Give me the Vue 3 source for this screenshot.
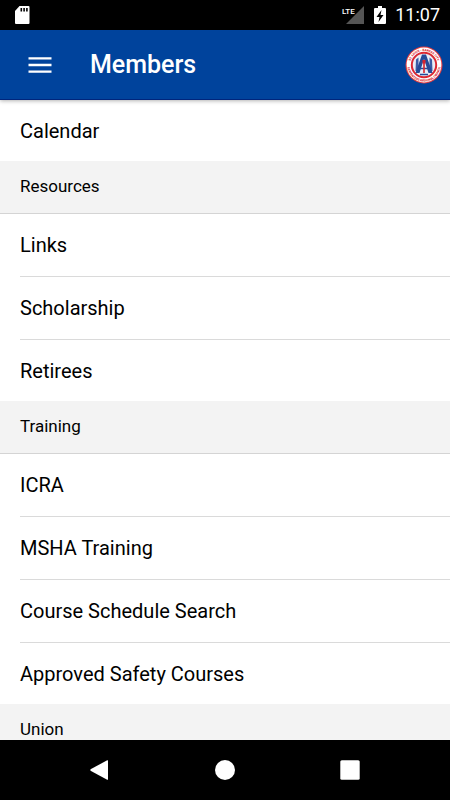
<template>
  <div class="screen">
    <div class="status-bar">
      <svg class="sd-icon" viewBox="0 0 16 20" aria-hidden="true">
        <path d="M5.500 1H14.500Q15.500 1 15.500 2V18Q15.500 19 14.500 19H2Q1 19 1 18V6Z" fill="#fff" />
        <path d="M6.500 3h1.600v3.500H6.500zM9.300 3h1.600v3.500H9.300zM12.100 3h1.600v3.500h-1.600z" fill="#000" />
      </svg>
      <div class="status-right">
        <svg class="signal-icon" viewBox="0 0 24 20" aria-label="LTE signal">
          <path d="M23 1V19H5Z" fill="#555" />
          <text x="1" y="9" class="lte">LTE</text>
        </svg>
        <svg class="battery-icon" viewBox="0 0 12 20" aria-hidden="true">
          <path d="M4 1h4v2h3q1 0 1 1v14q0 1-1 1H1q-1 0-1-1V4q0-1 1-1h3z" fill="#fff" />
          <path d="M7.500 5L2.500 12H5.500L4.500 17L9.500 10H6.500Z" fill="#000" />
        </svg>
        <span class="clock">11:07</span>
      </div>
    </div>

    <header class="app-bar">
      <button class="menu-btn" aria-label="Open menu">
        <svg viewBox="0 0 24 16" aria-hidden="true">
          <path d="M0.500 0.200h23v2.400h-23zM0.500 6.800h23v2.400h-23zM0.500 13.400h23v2.400h-23z" fill="#fff" />
        </svg>
      </button>
      <h1>Members</h1>
      <svg class="logo" viewBox="0 0 38 38" aria-label="Regional council logo">
        <defs>
          <path id="arc-top" d="M5 19a14 14 0 0 1 28 0" />
          <path id="arc-bottom" d="M2.400 19a16.600 16.600 0 0 0 33.200 0" />
        </defs>
        <circle cx="19" cy="19" r="18.500" fill="#e33b3f" />
        <circle cx="19" cy="19" r="17.400" fill="#fff" />
        <text class="logo-text"><textPath href="#arc-top" startOffset="50%">ST. LOUIS - KANSAS CITY</textPath></text>
        <text class="logo-text"><textPath href="#arc-bottom" startOffset="50%">CARPENTERS REGIONAL COUNCIL</textPath></text>
        <circle cx="19" cy="19" r="12.200" fill="#e9edf6" stroke="#dc2832" stroke-width="2" />
        <path d="M11 13.500L13.500 11.500V25H10.500zM27 13.500L24.500 11.500V25H27.500z" fill="#3b5ca5" />
        <path d="M17 8.500H21L27.500 27H23.500L19 13L14.500 27H10.500Z" fill="#254b98" />
        <path d="M13 22.500H25M15 28.500H23" stroke="#254b98" stroke-width="1.300" />
        <path d="M17.500 14h3v3.500h-0.700V27h-1.600v-9.500h-0.700z" fill="#d8242e" />
      </svg>
    </header>

    <main class="content">
      <section v-for="(group, i) in groups" :key="i" class="group">
        <h2 v-if="group.title">{{ group.title }}</h2>
        <ul v-if="group.items.length">
          <li v-for="item in group.items" :key="item">
            <a href="#" @click.prevent>{{ item }}</a>
          </li>
        </ul>
      </section>
    </main>

    <nav class="nav-bar" aria-label="System navigation">
      <button aria-label="Back">
        <svg viewBox="0 0 20 20"><path d="M18 0.800V19.200Q18 20 17.200 19.700L1 11Q-0.500 10 1 9L17.200 0.300Q18 0 18 0.800Z" fill="#fff" /></svg>
      </button>
      <button aria-label="Home">
        <svg viewBox="0 0 20 20"><circle cx="10" cy="10" r="10" fill="#fff" /></svg>
      </button>
      <button aria-label="Recent apps">
        <svg viewBox="0 0 20 20"><rect x="0.300" y="0.300" width="19.400" height="19.400" rx="1.500" fill="#fff" /></svg>
      </button>
    </nav>
  </div>
</template>

<script setup>
const groups = [
  { title: '', items: ['Calendar'] },
  { title: 'Resources', items: ['Links', 'Scholarship', 'Retirees'] },
  {
    title: 'Training',
    items: ['ICRA', 'MSHA Training', 'Course Schedule Search', 'Approved Safety Courses']
  },
  { title: 'Union', items: [] }
]
</script>

<style>
body {
  margin: 0;
}
</style>

<style scoped>
.screen {
  height: 100vh;
  display: flex;
  flex-direction: column;
  overflow: hidden;
  background: #fff;
  color: #000;
  font-family: Roboto, sans-serif;
}

button {
  padding: 0;
  border: none;
  background: none;
  cursor: pointer;
}

svg { display: block; }

.status-bar {
  flex: none;
  height: 30px;
  padding: 0 10px 0 14px;
  display: flex;
  align-items: center;
  justify-content: space-between;
  background: #000;
  color: #fff;
}
.status-right { display: flex; align-items: center; }
.sd-icon { width: 16px; height: 20px; }
.signal-icon { width: 24px; height: 20px; margin-right: 9px; }
.battery-icon { width: 12px; height: 20px; margin-right: 9px; }
.lte { font-size: 8px; font-weight: 500; fill: #fff; }
.clock { font-size: 18px; line-height: 32px; }

.app-bar {
  position: relative;
  flex: none;
  height: 70px;
  padding: 0 7px 0 28px;
  box-sizing: border-box;
  display: flex;
  align-items: center;
  background: #00439c;
  border-bottom: 1px solid #00257c;
  color: #fff;
  box-shadow: 0 1px 4px rgba(0, 0, 0, 0.3);
}
.menu-btn svg { width: 24px; height: 16px; }
.app-bar h1 {
  flex: 1;
  margin: 0 0 0 38px;
  font-size: 25px;
  font-weight: 500;
  line-height: 70px;
}
.logo { width: 38px; height: 38px; }
.logo-text {
  font-size: 3px;
  font-weight: 900;
  fill: #d8202a;
  text-anchor: middle;
}

.content {
  flex: 1;
  min-height: 0;
  overflow-y: auto;
  scrollbar-width: none;
}
.group h2 {
  height: 53px;
  margin: 0;
  padding: 0 20px;
  box-sizing: border-box;
  border-bottom: 1px solid #d4d4d4;
  background: #f3f3f3;
  font-size: 17px;
  font-weight: 400;
  line-height: 50px;
}
.group ul {
  margin: 0;
  padding: 0 0 0 20px;
  list-style: none;
}
.group li {
  height: 63px;
  box-sizing: border-box;
  border-bottom: 1px solid #dadada;
}
.group li:last-child {
  height: 61px;
  border-bottom: none;
}
.group a {
  display: block;
  font-size: 20px;
  line-height: 62px;
  color: inherit;
  text-decoration: none;
}

.nav-bar {
  flex: none;
  height: 60px;
  padding: 0 38px;
  display: flex;
  background: #000;
}
.nav-bar button {
  flex: 1;
  display: flex;
  align-items: center;
  justify-content: center;
}
.nav-bar svg { width: 20px; height: 20px; }
</style>
